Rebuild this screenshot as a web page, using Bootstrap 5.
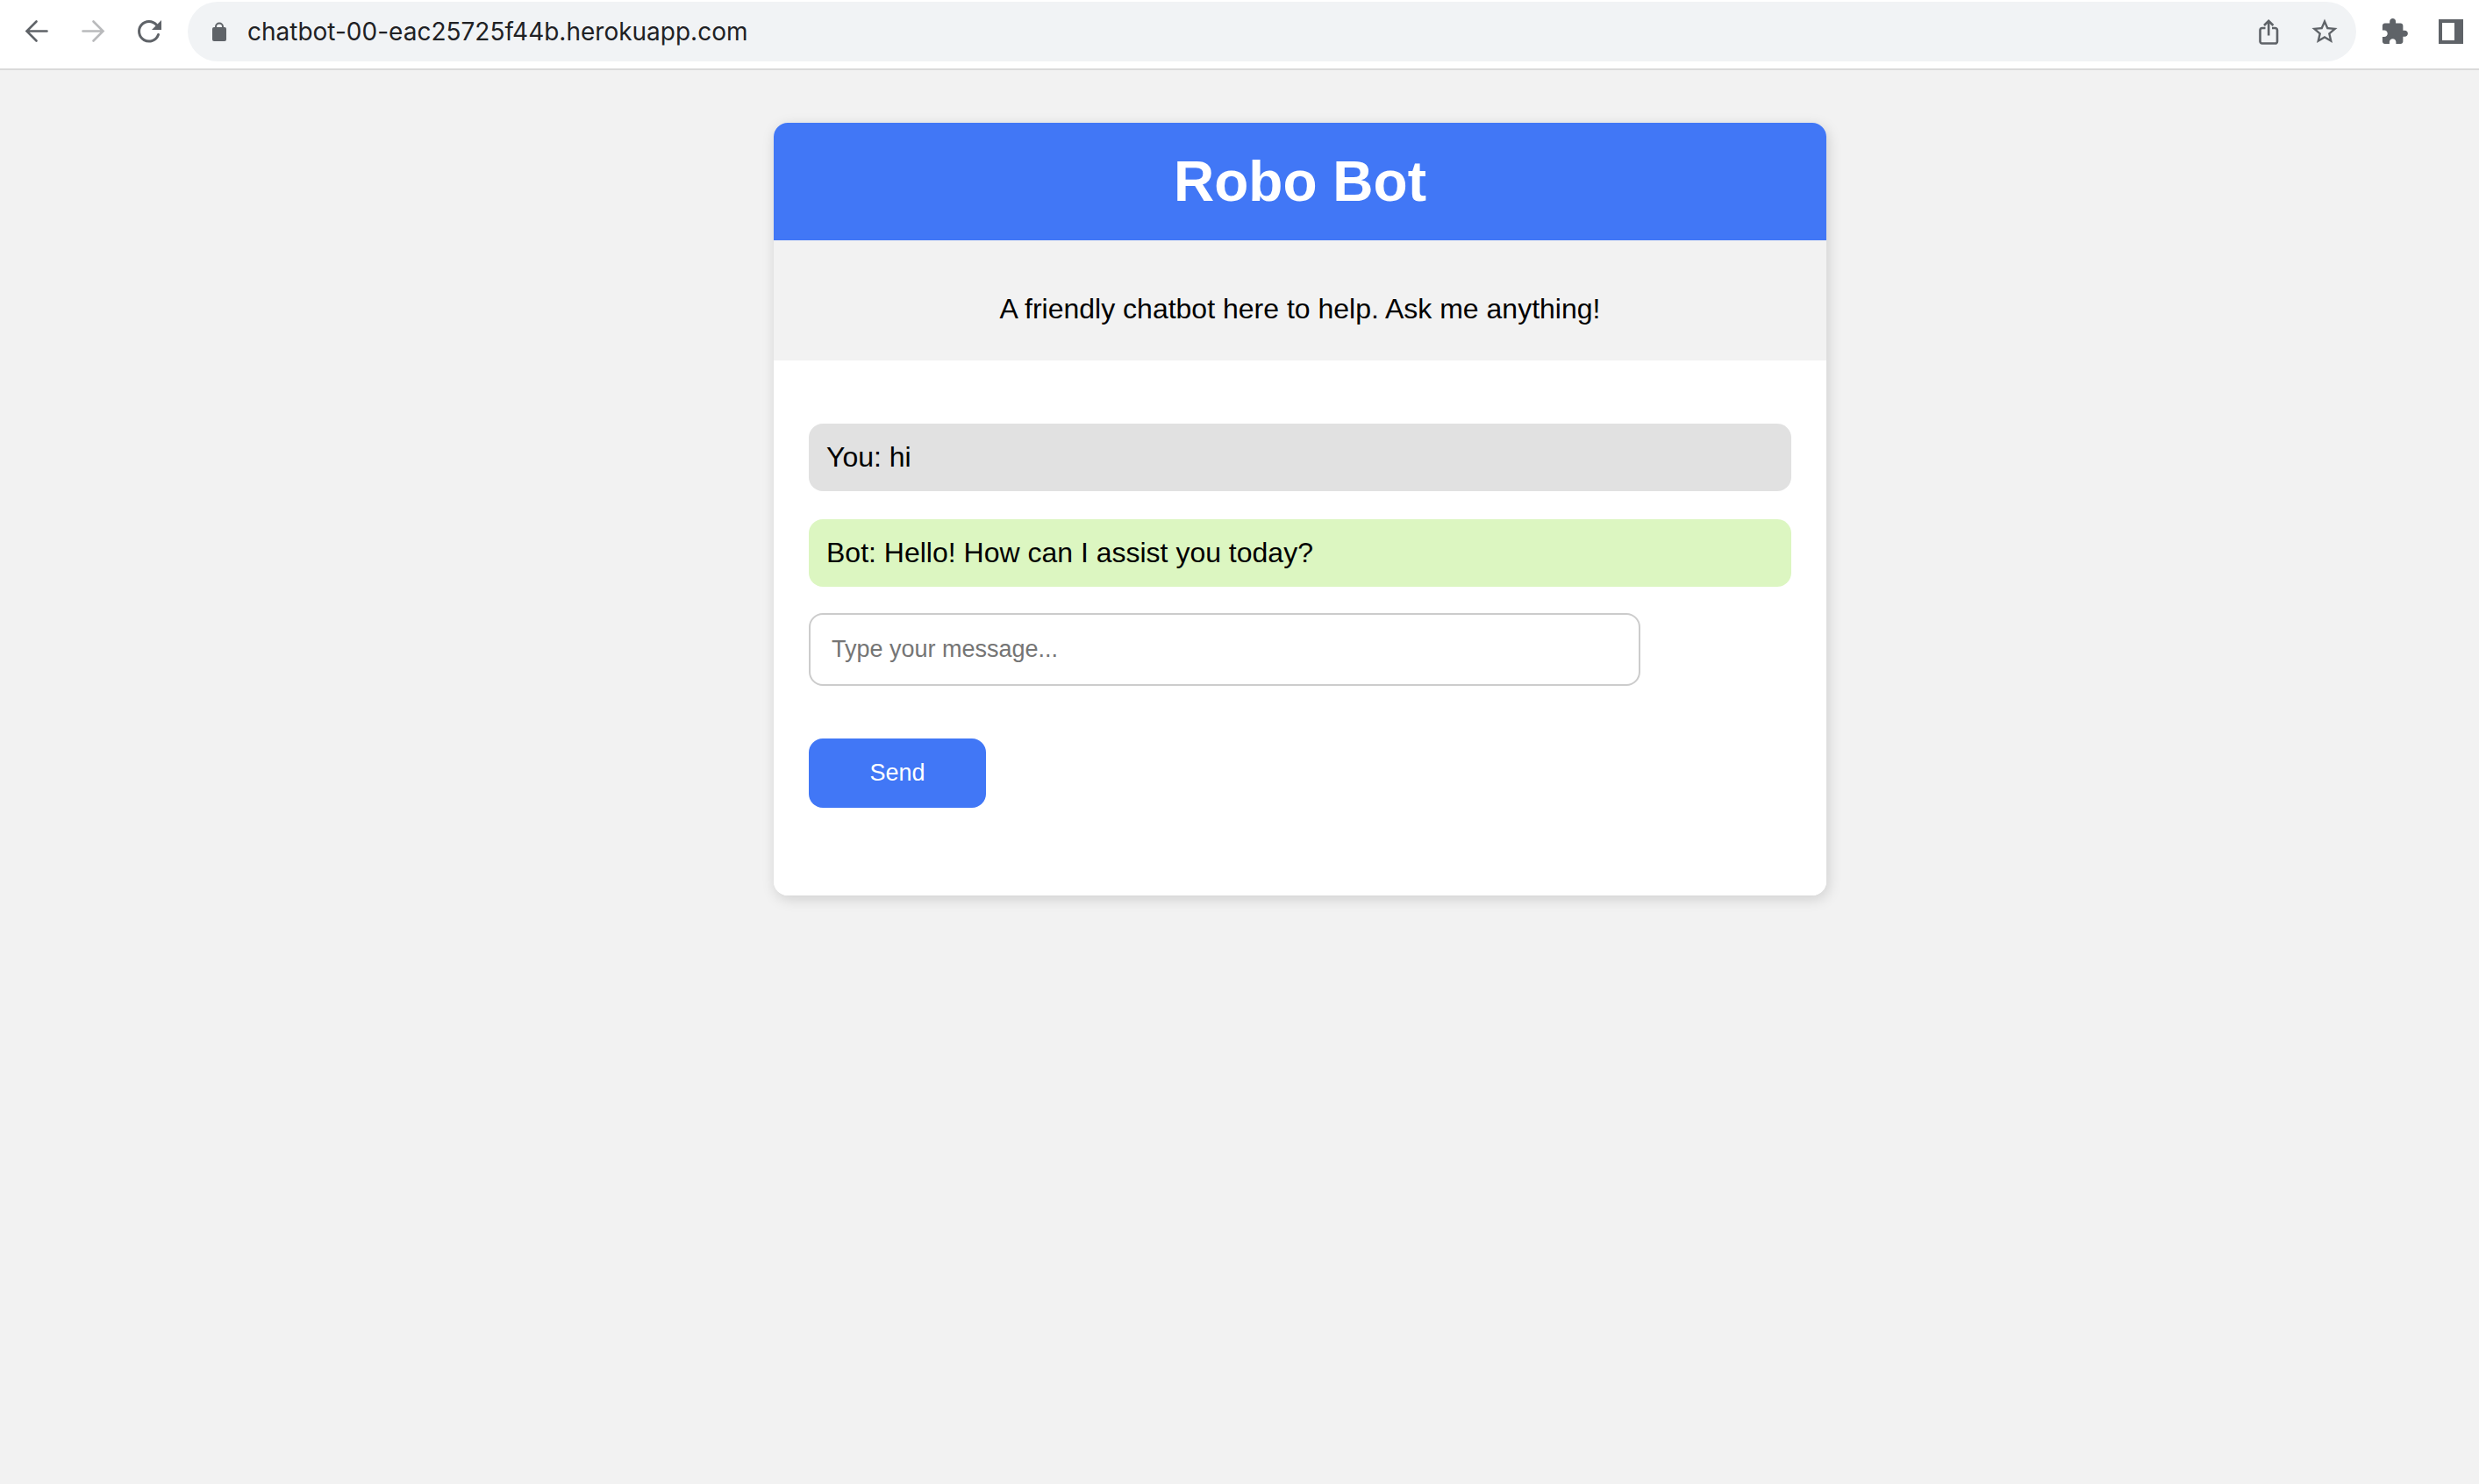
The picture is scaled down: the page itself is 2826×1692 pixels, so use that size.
<!DOCTYPE html>
<html lang="en">
<head>
<meta charset="utf-8">
<meta name="viewport" content="width=device-width, initial-scale=1">
<title>Robo Bot</title>
<link href="https://cdn.jsdelivr.net/npm/bootstrap@5.3.0/dist/css/bootstrap.min.css" rel="stylesheet">
<style>
  body { background: #f2f2f2; color: #000; font-family: "Liberation Sans", Arial, sans-serif; font-size: 32px; line-height: 37px; }
  .toolbar { padding: 2px 0 8px 10px; border-bottom: 2px solid #dadada; }
  .tool-btn { width: 64px; height: 64px; color: #5f6368; border: 0; }
  .tool-btn:disabled { color: #b9babc; opacity: 1; border: 0; }
  .tool-btn svg, .lock-icon { display: block; width: 32px; height: 32px; flex: none; }
  .lock-icon { color: #5f6368; }
  .address { height: 68px; margin: 0 12px; padding: 0 4px 0 20px; background: #f1f3f5; }
  .address-input { font: 28px/40px Inter, sans-serif; color: #202124; padding: 0 0 0 16px; min-width: 0; outline: 0; }
  .page { padding: 60px 0 60px 138px; }
  .chat { max-width: 1200px; border: 0; border-radius: 16px; box-shadow: 2px 4px 16px rgba(0, 0, 0, .15); }
  .chat-title { background: #4177f6; padding: 30px; }
  .chat-title h1 { font-size: 64px; line-height: 74px; }
  .chat-intro { background: #f2f2f2; padding: 60px 40px 40px; }
  .chat-body { padding: 72px 40px 100px; }
  .msg { padding: 20px; border-radius: 16px; }
  .msg-list { gap: 32px; margin-bottom: 30px; }
  .msg-user { background: #e1e1e1; }
  .msg-bot { background: #dcf6c1; }
  .chat-form { gap: 60px; }
  .msg-input { width: 948px; max-width: 100%; height: 83px; padding: 0 24px; border: 2px solid #ccc; border-radius: 16px; font-size: 27px; }
  .msg-input::placeholder { color: #757575; }
  .send-btn { width: 202px; height: 79px; border: 0; border-radius: 16px; background: #4177f6; font-size: 27px; }
</style>
</head>
<body>
<header class="toolbar d-flex align-items-center bg-white">
  <button type="button" class="tool-btn btn p-0 d-flex align-items-center justify-content-center" aria-label="Back">
    <svg viewBox="0 0 32 32" fill="none" stroke="currentColor" stroke-width="2.600" stroke-linecap="round" stroke-linejoin="miter"><path d="M27.500 15.500H5M15.500 4.500l-11 11 11 11"/></svg>
  </button>
  <button type="button" class="tool-btn btn p-0 d-flex align-items-center justify-content-center" aria-label="Forward" disabled>
    <svg viewBox="0 0 32 32" fill="none" stroke="currentColor" stroke-width="2.600" stroke-linecap="round"><path d="M4.500 15.500H27M16.500 4.500l11 11-11 11"/></svg>
  </button>
  <button type="button" class="tool-btn btn p-0 d-flex align-items-center justify-content-center" aria-label="Reload">
    <svg viewBox="0 0 32 32"><path d="M26.500 19.500A11.300 11.300 0 1 1 24.500 8.500" fill="none" stroke="currentColor" stroke-width="3" stroke-linecap="round"/><path d="M30 3v11H19z" fill="currentColor"/></svg>
  </button>
  <div class="address d-flex align-items-center flex-grow-1 rounded-pill">
    <svg class="lock-icon" viewBox="0 0 32 32" aria-hidden="true"><rect x="8" y="11" width="16" height="16" rx="2" fill="currentColor"/><path d="M12 12V10.500a4 4 0 0 1 8 0V12" fill="none" stroke="currentColor" stroke-width="2"/></svg>
    <input type="text" class="address-input flex-grow-1 border-0 bg-transparent" aria-label="Address" value="chatbot-00-eac25725f44b.herokuapp.com">
    <button type="button" class="tool-btn btn p-0 d-flex align-items-center justify-content-center" aria-label="Share">
      <svg viewBox="0 0 32 32" fill="none" stroke="currentColor" stroke-width="2.600"><path d="M12.500 12H9a2.500 2.500 0 0 0-2.500 2.500v13A2.200 2.200 0 0 0 9 29.500h14.500a2.200 2.200 0 0 0 2.500-2.200v-12.800A2.500 2.500 0 0 0 23.500 12H20"/><path d="M16.200 20.500V4.500M11 9l5.200-5.200L21.400 9"/></svg>
    </button>
    <button type="button" class="tool-btn btn p-0 d-flex align-items-center justify-content-center" aria-label="Bookmark">
      <svg viewBox="1 1 22 22" fill="currentColor"><path d="M22 9.240l-7.190-.62L12 2 9.190 8.630 2 9.240l5.460 4.730L5.820 21 12 17.270 18.180 21l-1.630-7.030L22 9.240zM12 15.400l-3.760 2.270 1-4.280-3.320-2.880 4.380-.38L12 6.100l1.710 4.040 4.380.38-3.320 2.880 1 4.280L12 15.400z"/></svg>
    </button>
  </div>
  <button type="button" class="tool-btn btn p-0 d-flex align-items-center justify-content-center" aria-label="Extensions">
    <svg viewBox="0.600 0.300 23.200 23.200" fill="currentColor"><path d="M20.500 11H19V7c0-1.100-.9-2-2-2h-4V3.500C13 2.120 11.880 1 10.500 1S8 2.120 8 3.500V5H4c-1.100 0-1.990.9-1.990 2v3.800H3.500c1.490 0 2.700 1.210 2.700 2.700s-1.210 2.700-2.700 2.700H2V20c0 1.100.9 2 2 2h3.800v-1.500c0-1.490 1.210-2.700 2.700-2.700s2.700 1.210 2.700 2.700V22H17c1.100 0 2-.9 2-2v-4h1.500c1.380 0 2.500-1.120 2.500-2.500S21.880 11 20.500 11z"/></svg>
  </button>
  <button type="button" class="tool-btn btn p-0 d-flex align-items-center justify-content-center" aria-label="Side panel">
    <svg viewBox="0 0 32 32" fill="currentColor"><path fill-rule="evenodd" d="M2 2h28v28H2zM6 6v20h14V6z"/></svg>
  </button>
</header>
<main class="page">
  <section class="chat card mx-auto overflow-hidden">
    <div class="chat-title text-center text-white">
      <h1 class="fw-bold m-0">Robo Bot</h1>
    </div>
    <div class="chat-intro text-center">
      <p class="m-0">A friendly chatbot here to help. Ask me anything!</p>
    </div>
    <div class="chat-body bg-white">
      <div class="msg-list d-flex flex-column">
        <p class="msg msg-user mb-0">You: hi</p>
        <p class="msg msg-bot mb-0">Bot: Hello! How can I assist you today?</p>
      </div>
      <form class="chat-form d-flex flex-column align-items-start">
        <input type="text" class="msg-input form-control" placeholder="Type your message..." aria-label="Message">
        <button type="submit" class="send-btn btn btn-primary p-0">Send</button>
      </form>
    </div>
  </section>
</main>
<script src="https://cdn.jsdelivr.net/npm/bootstrap@5.3.0/dist/js/bootstrap.bundle.min.js"></script>
</body>
</html>
